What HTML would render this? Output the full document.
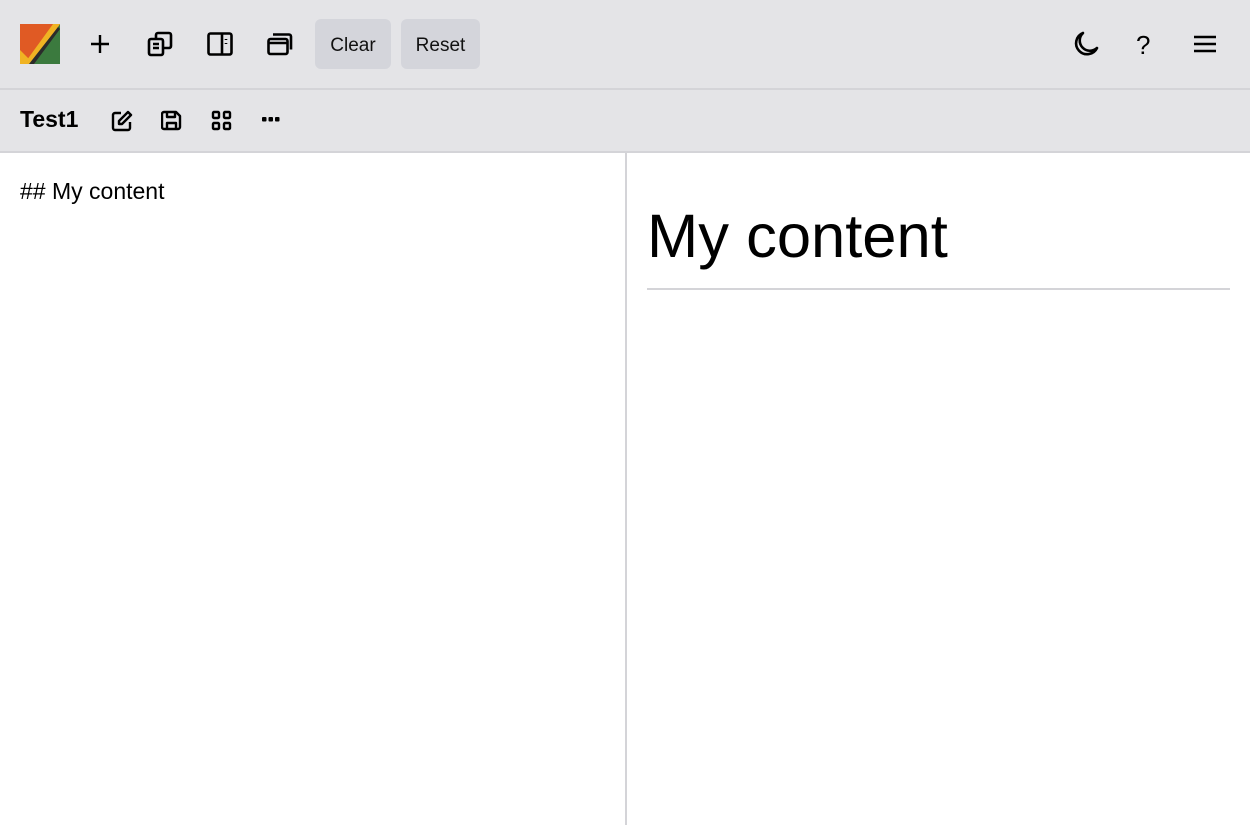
<!DOCTYPE html>
<html><head><style>
body{margin:0;width:1250px;height:825px;overflow:hidden;font-family:"Liberation Sans",sans-serif;background:#fff;position:relative}
.bar1{position:absolute;left:0;top:0;width:1250px;height:88px;background:#e4e4e7;border-bottom:2px solid #d4d4d8}
.bar2{position:absolute;left:0;top:90px;width:1250px;height:61px;background:#e4e4e7;border-bottom:2px solid #d4d4d8}
.ic{position:absolute}
.btn{position:absolute;top:19px;height:50px;background:#d4d5db;border-radius:6px;font-size:19px;line-height:54px;text-align:center;color:#111}
.div{position:absolute;left:625px;top:153px;width:2px;height:672px;background:#d4d4d8}
</style></head><body>
<div class="bar1">
<svg class="ic" style="left:20px;top:24px" width="40" height="40" viewBox="0 0 40 40">
<rect width="40" height="40" fill="#e05a24"/>
<polygon points="40,0 40,40 14,40" fill="#3b7a3e"/>
<polygon points="0,40 0,26 14,40" fill="#f0b323"/>
<polygon points="33,0 40,0 12,40 4,40" fill="#f0b323"/>
<polygon points="38,3 40,5 14,40 9,40" fill="#2b2b2b"/>
</svg>
<svg class="ic" style="left:88px;top:32px" width="24" height="24" viewBox="0 0 24 24" fill="none" stroke="#000" stroke-width="2.4"><path d="M12 3v18M3 12h18"/></svg>
<svg class="ic" style="left:147px;top:31px" width="26" height="26" viewBox="0 0 26 26" fill="none" stroke="#000" stroke-width="2.6" stroke-linejoin="round"><rect x="2" y="8" width="14" height="16" rx="2"/><path d="M9 8V4a2 2 0 0 1 2-2h11a2 2 0 0 1 2 2v11a2 2 0 0 1-2 2h-6M6 13h6M6 17h6"/></svg>
<svg class="ic" style="left:207px;top:32px" width="26" height="24" viewBox="0 0 26 24" fill="none" stroke="#000" stroke-width="2.6"><rect x="1.5" y="1.5" width="23" height="21" rx="2"/><path d="M15 1.5v21M19 7v1M19 11v1"/></svg>
<svg class="ic" style="left:267px;top:32px" width="26" height="24" viewBox="0 0 26 24" fill="none" stroke="#000" stroke-width="2.6"><rect x="1.5" y="7" width="19" height="15" rx="2"/><path d="M1.5 11h19M6 2.5h16a2 2 0 0 1 2 2v13"/></svg>
<div class="btn" style="left:315px;width:76px">Clear</div>
<div class="btn" style="left:401px;width:79px">Reset</div>
<svg class="ic" style="left:1072px;top:31px" width="28" height="28" viewBox="0 0 28 28" fill="none" stroke="#000" stroke-width="2.6" stroke-linejoin="round"><path d="M11 2A11 11 0 1 0 25 17A9 9 0 0 1 11 2z"/></svg>
<div class="ic" style="left:1136px;top:30px;font-size:26px">?</div>
<svg class="ic" style="left:1194px;top:35px" width="22" height="18" viewBox="0 0 22 18" stroke="#000" stroke-width="2.6"><path d="M0 2h22M0 9h22M0 16h22"/></svg>
</div>
<div class="bar2">
<div class="ic" style="left:20px;top:16px;font-size:23px;font-weight:bold">Test1</div>
<svg class="ic" style="left:111px;top:20px" width="22" height="22" viewBox="0 0 22 22" fill="none" stroke="#000" stroke-width="2.4" stroke-linejoin="round"><path d="M10 3H4a2 2 0 0 0-2 2v13a2 2 0 0 0 2 2h13a2 2 0 0 0 2-2v-6"/><path d="M17 2l3 3-9 9H8v-3z"/></svg>
<svg class="ic" style="left:161px;top:20px" width="21" height="21" viewBox="0 0 21 21" fill="none" stroke="#000" stroke-width="2.4" stroke-linejoin="round"><path d="M3 2h12l4 4v11a2 2 0 0 1-2 2H3a2 2 0 0 1-2-2V4a2 2 0 0 1 2-2z"/><path d="M6 2v5h8V2M6 19v-6h9v6"/></svg>
<svg class="ic" style="left:211px;top:20px" width="21" height="21" viewBox="0 0 21 21" fill="none" stroke="#000" stroke-width="2.4"><rect x="2" y="2" width="6" height="6" rx="1"/><rect x="13" y="2" width="6" height="6" rx="1"/><rect x="2" y="13" width="6" height="6" rx="1"/><rect x="13" y="13" width="6" height="6" rx="1"/></svg>
<svg class="ic" style="left:262px;top:27px" width="18" height="6" viewBox="0 0 18 6" fill="#000"><rect x="0" y="0" width="4.5" height="4.5" rx="1"/><rect x="6.5" y="0" width="4.5" height="4.5" rx="1"/><rect x="13" y="0" width="4.5" height="4.5" rx="1"/></svg>
</div>
<div class="ic" style="left:20px;top:178px;font-size:23px">## My content</div>
<div class="ic" style="left:647px;top:201px;font-size:61.5px;line-height:72px">My content</div>
<div class="ic" style="left:647px;top:288px;width:583px;height:2px;background:#d4d4d8"></div>
<div class="div"></div>
</body></html>
